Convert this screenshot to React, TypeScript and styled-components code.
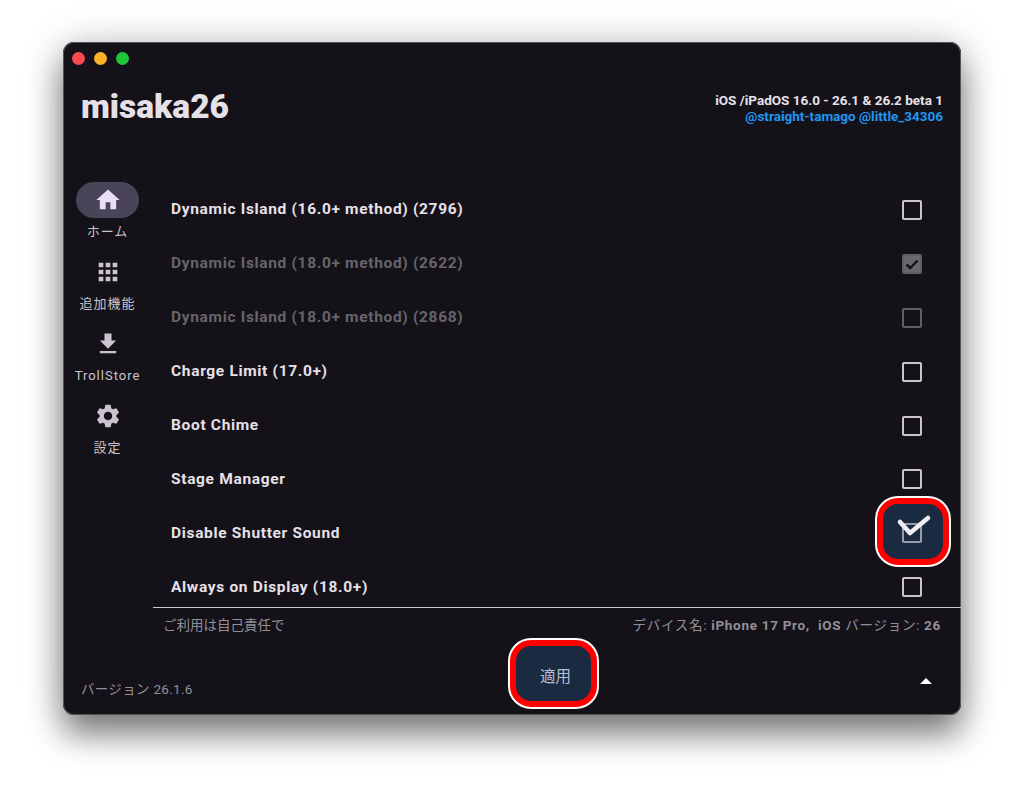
import React from "react";
import styled, { createGlobalStyle } from "styled-components";
import { MdHome, MdApps, MdFileDownload, MdSettings } from "react-icons/md";

const Global = createGlobalStyle`
  html, body { margin: 0; background: #fff; }
  body { font-family: Roboto, "Noto Sans CJK JP", sans-serif; }
`;

const Page = styled.div`
  width: 1024px;
  height: 799px;
  padding: 42px 0 0 63px;
  box-sizing: border-box;
  overflow: hidden;
`;

const Win = styled.div`
  width: 898px;
  height: 673px;
  box-sizing: border-box;
  display: flex;
  flex-direction: column;
  background: #141218;
  border-radius: 11px;
  box-shadow: 0 0 0 1px #55535a inset, 0 20px 32px rgba(0, 0, 0, 0.45), 0 2px 40px rgba(0, 0, 0, 0.22);
  color: #e6e0e9;
`;

const Lights = styled.div`
  display: flex;
  gap: 9px;
  padding: 10px 0 0 9px;
  height: 13px;
`;

const Light = styled.span<{ $c: string }>`
  width: 13px;
  height: 13px;
  border-radius: 50%;
  background: ${(p) => p.$c};
`;

const Header = styled.header`
  height: 117.5px;
  box-sizing: border-box;
  display: flex;
  justify-content: space-between;
  padding: 22px 18px 0;
`;

const Title = styled.h1`
  margin: 0;
  font-size: 33.5px;
  line-height: 40px;
  font-weight: 900;
  color: #e6e0e9;
`;

const Meta = styled.div`
  text-align: right;
  font-size: 13.5px;
  line-height: 16px;
  font-weight: 700;
  padding-top: 5px;
`;

const Link = styled.div`
  color: #2196f3;
`;

const Main = styled.div`
  flex: 1;
  display: flex;
  min-height: 0;
`;

const Sidebar = styled.aside`
  width: 90px;
  flex: none;
  display: flex;
  flex-direction: column;
  align-items: center;
`;

const Nav = styled.nav`
  margin: -1px 0 0 -1px;
`;

const NavItem = styled.div`
  height: 72px;
  width: 90px;
  display: flex;
  flex-direction: column;
  align-items: center;
`;

const Pill = styled.div<{ $active?: boolean }>`
  width: 63px;
  height: 36px;
  border-radius: 18px;
  display: flex;
  align-items: center;
  justify-content: center;
  background: ${(p) => (p.$active ? "#4a4458" : "transparent")};
  color: ${(p) => (p.$active ? "#e8def8" : "#cac4d0")};
  font-size: 28px;
`;

const NavLabel = styled.div`
  margin-top: 5px;
  font-size: 13px;
  line-height: 18px;
  letter-spacing: 1px;
  color: #cac4d0;
  white-space: nowrap;
`;

const Version = styled.div`
  margin-top: auto;
  align-self: flex-start;
  padding: 0 0 17px 18px;
  font-size: 13.5px;
  line-height: 18px;
  letter-spacing: 0.3px;
  color: #938f99;
  white-space: nowrap;
`;

const Content = styled.div`
  flex: 1;
  min-width: 0;
  display: flex;
  flex-direction: column;
`;

const List = styled.div`
  height: 424px;
  flex: none;
  overflow: hidden;
  box-shadow: 0 1px 0 #cac4d0;
`;

const Row = styled.div<{ $off?: boolean }>`
  height: 53.9px;
  display: flex;
  align-items: center;
  justify-content: space-between;
  padding: 0 39px 0 18px;
  font-size: 15.5px;
  font-weight: 700;
  letter-spacing: 0.67px;
  color: ${(p) => (p.$off ? "#67646b" : "#e6e0e9")};
`;

const BoxWrap = styled.div`
  position: relative;
  width: 20px;
  height: 20px;
  margin-top: 1px;
`;

const Box = styled.div<{ $state: "on" | "off" | "dimOn" | "dimOff" | "hot" }>`
  position: relative;
  width: 20px;
  height: 20px;
  box-sizing: border-box;
  border-radius: 2px;
  border: 2px solid
    ${(p) =>
      p.$state === "off"
        ? "#cac4d0"
        : p.$state === "hot"
        ? "#9a9aa6"
        : "#605d66"};
  background: ${(p) => (p.$state === "dimOn" ? "#6a676f" : "transparent")};
  display: flex;
  align-items: center;
  justify-content: center;
  z-index: 2;
`;

const Tick = styled.svg`
  width: 16px;
  height: 16px;
  fill: none;
  stroke: #141218;
  stroke-width: 2.4;
`;

const Highlight = styled.div`
  position: absolute;
  left: -26px;
  top: -26px;
  width: 74px;
  height: 69px;
  box-sizing: border-box;
  border-radius: 22px;
  background: #1a2a40;
  border: 7px solid #f00;
  outline: 2px solid #fff;
  outline-offset: -1px;
  z-index: 1;
`;

const BigTick = styled.svg`
  position: absolute;
  left: -5px;
  top: -9px;
  width: 34px;
  height: 28px;
  overflow: visible;
  fill: none;
  stroke: #f0eef4;
  stroke-width: 4.6;
  stroke-linecap: round;
  stroke-linejoin: round;
  z-index: 3;
`;

const Info = styled.div`
  display: flex;
  justify-content: space-between;
  padding: 9px 20px 0 10px;
  height: 19px;
  font-size: 13.5px;
  line-height: 18px;
  color: #938f99;
`;

const Device = styled.span`
  letter-spacing: 0.7px;
`;

const Strong = styled.b`
  font-weight: 700;
`;

const Actions = styled.div`
  flex: 1;
  position: relative;
  display: flex;
  justify-content: center;
  align-items: flex-start;
  padding-top: 4px;
`;

const ApplyButton = styled.button`
  position: relative;
  width: 70px;
  height: 52px;
  margin-right: 8px;
  box-sizing: content-box;
  padding: 3px 0 0 5px;
  border: 7px solid #f00;
  border-radius: 22px;
  outline: 2px solid #fff;
  outline-offset: -1px;
  background: #1a2a40;
  color: #b4c0d4;
  font-family: inherit;
  font-size: 15.5px;
`;

const Caret = styled.div`
  position: absolute;
  right: 29px;
  top: 43px;
  width: 0;
  height: 0;
  border-left: 6px solid transparent;
  border-right: 6px solid transparent;
  border-bottom: 6px solid #fff;
`;

const nav = [
  { icon: <MdHome />, label: "ホーム", active: true },
  { icon: <MdApps />, label: "追加機能" },
  { icon: <MdFileDownload />, label: "TrollStore" },
  { icon: <MdSettings />, label: "設定" },
];

const rows: { t: string; s: "off" | "dimOn" | "dimOff" | "hot"; dim?: boolean }[] = [
  { t: "Dynamic Island (16.0+ method) (2796)", s: "off" },
  { t: "Dynamic Island (18.0+ method) (2622)", s: "dimOn", dim: true },
  { t: "Dynamic Island (18.0+ method) (2868)", s: "dimOff", dim: true },
  { t: "Charge Limit (17.0+)", s: "off" },
  { t: "Boot Chime", s: "off" },
  { t: "Stage Manager", s: "off" },
  { t: "Disable Shutter Sound", s: "hot" },
  { t: "Always on Display (18.0+)", s: "off" },
];

export default function App() {
  return (
    <Page>
      <Global />
      <Win>
        <Lights>
          <Light $c="#fb4a4f" />
          <Light $c="#fbb32a" />
          <Light $c="#22c43a" />
        </Lights>
        <Header>
          <Title>misaka26</Title>
          <Meta>
            <div>iOS /iPadOS 16.0 - 26.1 &amp; 26.2 beta 1</div>
            <Link>@straight-tamago @little_34306</Link>
          </Meta>
        </Header>
        <Main>
          <Sidebar>
            <Nav>
              {nav.map((n) => (
                <NavItem key={n.label}>
                  <Pill $active={n.active}>{n.icon}</Pill>
                  <NavLabel>{n.label}</NavLabel>
                </NavItem>
              ))}
            </Nav>
            <Version>バージョン 26.1.6</Version>
          </Sidebar>
          <Content>
            <List>
              {rows.map((r) => (
                <Row key={r.t} $off={r.dim}>
                  {r.t}
                  <BoxWrap>
                    {r.s === "hot" && <Highlight />}
                    <Box $state={r.s}>
                      {r.s === "dimOn" && (
                        <Tick viewBox="0 0 16 16">
                          <path d="M2.5 8.5 6.3 12 13.5 4.5" />
                        </Tick>
                      )}
                    </Box>
                    {r.s === "hot" && (
                      <BigTick viewBox="0 0 34 28">
                        <path d="M3 8 13 19 31 4" />
                      </BigTick>
                    )}
                  </BoxWrap>
                </Row>
              ))}
            </List>
            <Info>
              <span>ご利用は自己責任で</span>
              <Device>
                デバイス名: <Strong>iPhone 17 Pro,</Strong>&nbsp; <Strong>iOS</Strong> バージョン: <Strong>26</Strong>
              </Device>
            </Info>
            <Actions>
              <ApplyButton>適用</ApplyButton>
              <Caret />
            </Actions>
          </Content>
        </Main>
      </Win>
    </Page>
  );
}
